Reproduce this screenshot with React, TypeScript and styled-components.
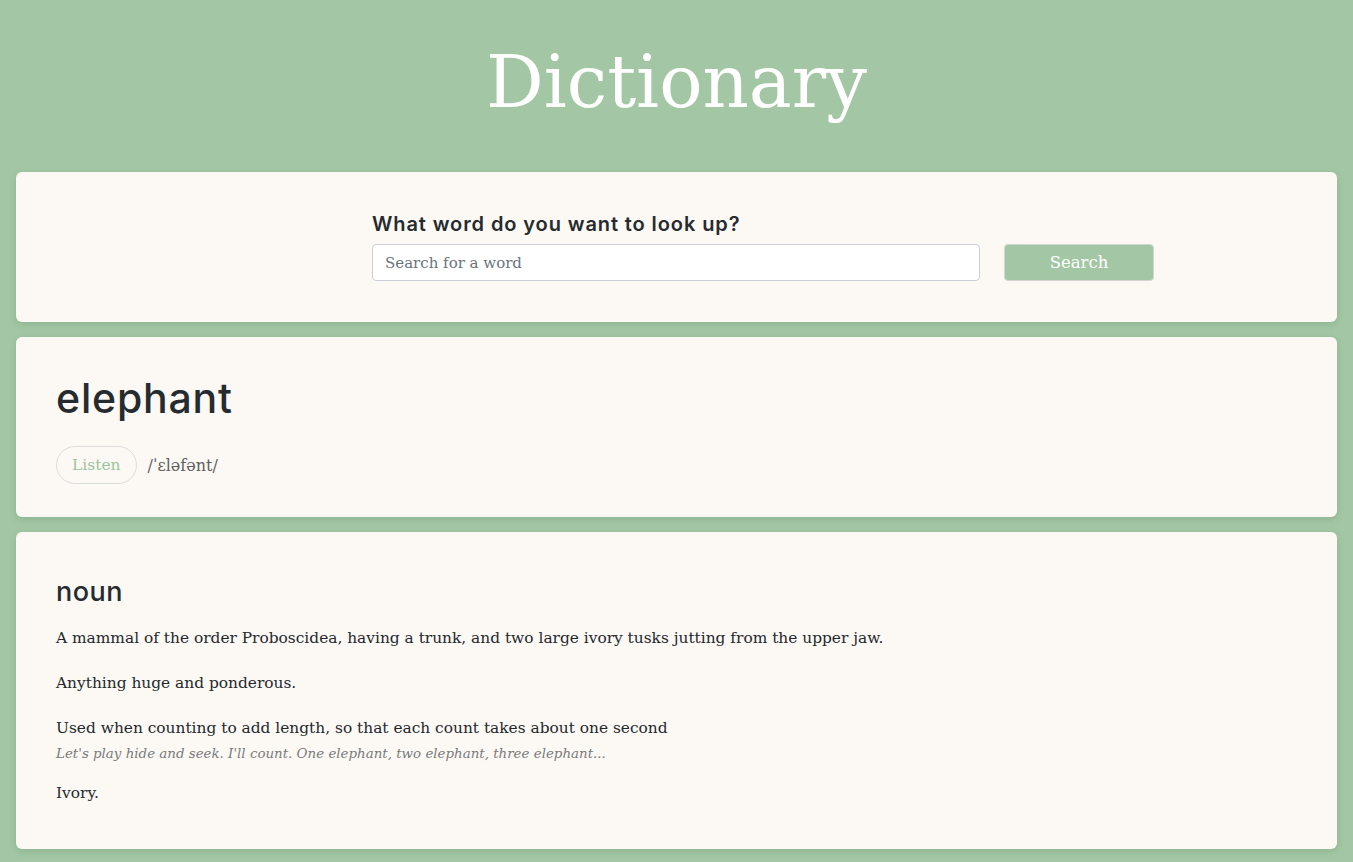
import styled, { createGlobalStyle } from 'styled-components';

const GlobalStyle = createGlobalStyle`
  body {
    margin: 0;
    background: #a3c7a4;
    font-family: "DejaVu Serif", "Liberation Serif", serif;
    color: #2b2f33;
  }
`;

const Page = styled.div`
  padding: 0 16px 14px;
`;

const Title = styled.h1`
  margin: 0;
  padding: 34px 0 42px;
  text-align: center;
  font-family: "DejaVu Serif", serif;
  font-weight: 400;
  font-size: 72px;
  line-height: 96px;
  color: #fff;
`;

const Card = styled.section<{ $pad: string }>`
  background: #fcf9f5;
  border-radius: 6px;
  box-shadow: 0 2px 7px rgba(60, 100, 60, 0.2);
  padding: ${(p) => p.$pad};
  margin-bottom: 15px;
`;

const Form = styled.form`
  margin-left: 356px;
  width: 782px;
`;

const Label = styled.div`
  font-family: Inter, "Open Sans", sans-serif;
  font-weight: 600;
  font-size: 20px;
  letter-spacing: 0.9px;
  line-height: 24px;
  margin-bottom: 8px;
  color: #262b2f;
`;

const Row = styled.div`
  display: flex;
  gap: 24px;
`;

const Input = styled.input`
  flex: 1;
  height: 37px;
  box-sizing: border-box;
  border: 1px solid #ccd0d5;
  border-radius: 4px;
  padding: 0 12px;
  font-family: "DejaVu Serif", serif;
  font-size: 15px;
  color: #333;
  background: #fff;
  &::placeholder {
    color: #6c737a;
  }
`;

const Button = styled.button`
  width: 150px;
  height: 37px;
  border: 1px solid #d4d4d4;
  border-radius: 4px;
  background: #a3c7a4;
  color: #fff;
  font-family: "DejaVu Serif", serif;
  font-size: 16.5px;
`;

const Word = styled.h2`
  margin: 0 0 23px;
  font-family: Inter, "Open Sans", sans-serif;
  font-weight: 500;
  font-size: 41px;
  letter-spacing: 0.8px;
  line-height: 50px;
  color: #262b2f;
`;

const Phonetic = styled.div`
  display: flex;
  align-items: center;
  gap: 11px;
`;

const Listen = styled.button`
  height: 38px;
  padding: 0 15px;
  border: 1px solid #dcdcdc;
  border-radius: 19px;
  background: transparent;
  color: #9cc39d;
  font-family: "DejaVu Serif", serif;
  font-size: 15.5px;
`;

const Ipa = styled.span`
  font-size: 16px;
  color: #5f5f5f;
`;

const Part = styled.h3`
  margin: 0 0 16px;
  font-family: Inter, "Open Sans", sans-serif;
  font-weight: 500;
  font-size: 27px;
  letter-spacing: 0.5px;
  line-height: 34px;
  color: #262b2f;
`;

const Definition = styled.div`
  margin-bottom: 19px;
`;

const Meaning = styled.p`
  margin: 0;
  font-size: 15.4px;
  line-height: 26px;
  color: #24282c;
`;

const Example = styled.p`
  margin: 3px 0 -3px;
  font-style: italic;
  font-size: 13.4px;
  line-height: 20px;
  color: #7a7a7a;
`;

const definitions = [
  { text: 'A mammal of the order Proboscidea, having a trunk, and two large ivory tusks jutting from the upper jaw.' },
  { text: 'Anything huge and ponderous.' },
  {
    text: 'Used when counting to add length, so that each count takes about one second',
    example: "Let's play hide and seek. I'll count. One elephant, two elephant, three elephant...",
  },
  { text: 'Ivory.' },
];

export default function App() {
  return (
    <Page>
      <GlobalStyle />
      <Title>Dictionary</Title>
      <Card $pad="40px 0 41px">
        <Form onSubmit={(e) => e.preventDefault()}>
          <Label>What word do you want to look up?</Label>
          <Row>
            <Input placeholder="Search for a word" />
            <Button type="submit">Search</Button>
          </Row>
        </Form>
      </Card>
      <Card $pad="36px 40px 33px">
        <Word>elephant</Word>
        <Phonetic>
          <Listen>Listen</Listen>
          <Ipa>/ˈɛləfənt/</Ipa>
        </Phonetic>
      </Card>
      <Card $pad="43px 40px 24px">
        <Part>noun</Part>
        {definitions.map((d) => (
          <Definition key={d.text}>
            <Meaning>{d.text}</Meaning>
            {d.example && <Example>{d.example}</Example>}
          </Definition>
        ))}
      </Card>
    </Page>
  );
}
